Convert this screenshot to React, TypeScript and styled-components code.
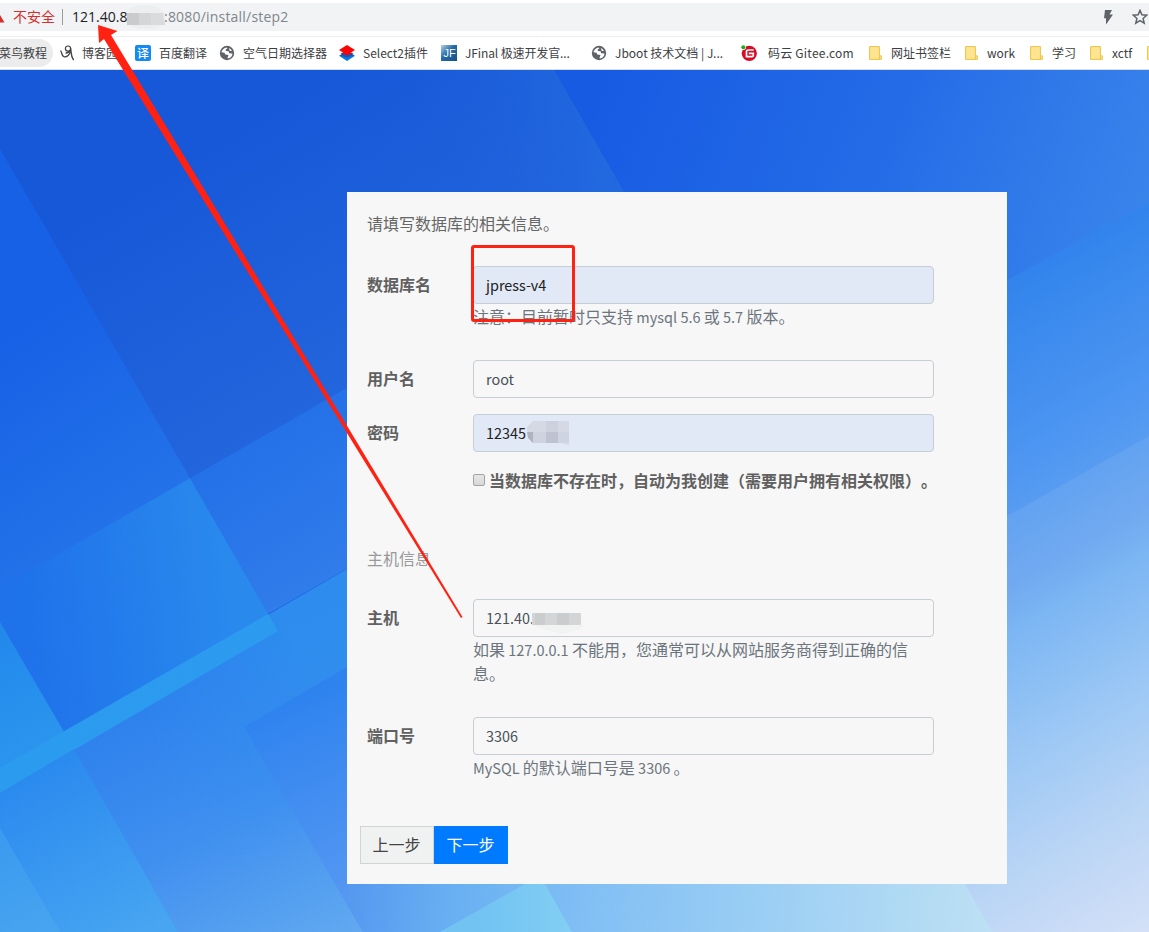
import React from 'react';
import styled, { createGlobalStyle } from 'styled-components';

const Global = createGlobalStyle`
  * { box-sizing: border-box; }
  body { margin: 0; background: #fff; overflow: hidden; }
`;

const Window = styled.div`
  position: relative;
  width: 1149px;
  height: 932px;
  overflow: hidden;
  display: flex;
  flex-direction: column;
  font-family: 'Noto Sans CJK SC', 'Noto Sans', sans-serif;
`;

const AddressBar = styled.div`
  flex: none;
  height: 28px;
  margin-top: 3px;
  background: #f1f3f4;
  display: flex;
  align-items: center;
  font-family: 'Open Sans', 'Noto Sans CJK SC', sans-serif;
  font-size: 14px;
  line-height: 28px;
  white-space: nowrap;
`;

const Insecure = styled.span`
  flex: none;
  color: #d3302f;
  margin-left: 13px;
  width: 42px;
`;

const Divider = styled.span`
  flex: none;
  width: 1px;
  height: 16px;
  background: #9a9da1;
  margin: 0 9px 0 7px;
`;

const Url = styled.span<{ $width: number; $muted?: boolean; $spacing?: number }>`
  flex: none;
  width: ${(p) => p.$width}px;
  color: ${(p) => (p.$muted ? '#80868b' : '#202124')};
  letter-spacing: ${(p) => p.$spacing ?? 0}px;
`;

const BarActions = styled.div`
  margin-left: auto;
  display: flex;
  align-items: center;
  gap: 19px;
  width: 46px;
  flex: none;
  svg { flex: none; }
`;

const Bookmarks = styled.nav`
  flex: none;
  height: 34px;
  margin-top: 5px;
  border-top: 1px solid #eceef0;
  border-bottom: 1px solid #d9dde3;
  display: flex;
  align-items: center;
  font-size: 12px;
  color: #3c4043;
  white-space: nowrap;
  svg { flex: none; display: block; }
`;

const Pill = styled.div`
  flex: none;
  width: 53px;
  height: 28px;
  margin-right: 7px;
  border-radius: 0 14px 14px 0;
  background: #ececed;
  line-height: 27px;
  text-indent: -1px;
`;

const Bookmark = styled.div<{ $width: number; $gap: number; $spacing?: number }>`
  flex: none;
  width: ${(p) => p.$width}px;
  display: flex;
  align-items: center;
  gap: ${(p) => p.$gap}px;
  letter-spacing: ${(p) => p.$spacing ?? 0}px;
`;

const Title = styled.span`
  line-height: 16px;
`;

const Page = styled.main`
  position: relative;
  flex: 1;
  overflow: hidden;
  padding: 122px 0 0 347px;
`;

const Backdrop = styled.svg`
  position: absolute;
  left: 0;
  top: 0;
`;

const Card = styled.form`
  position: relative;
  width: 660px;
  height: 692px;
  background: #f7f7f7;
  padding: 19px 20px 0;
  font-size: 16px;
  line-height: 24px;
  color: #666;
`;

const Intro = styled.p`
  margin: 0 0 31px;
`;

const Field = styled.div<{ $after: number }>`
  display: grid;
  grid-template-columns: 106px 461px;
  margin-bottom: ${(p) => p.$after}px;
`;

const Label = styled.label`
  font-weight: 700;
  color: #606060;
  line-height: 36px;
`;

const Control = styled.div<{ $filled?: boolean }>`
  position: relative;
  height: 38px;
  border: 1px solid #c7cdd6;
  border-radius: 4px;
  background: ${(p) => (p.$filled ? '#e1e8f6' : '#f7f7f7')};
  color: ${(p) => (p.$filled ? '#202020' : '#495057')};
  padding: 0 12px;
  font-size: 14.4px;
  line-height: 36px;
`;

const Help = styled.div`
  margin-bottom: 1px;
  color: #6c757d;
`;

const Latin = styled.span`
  font-size: 14.5px;
  line-height: 1;
`;

const CheckRow = styled.div`
  display: flex;
  align-items: center;
  gap: 4px;
  margin-left: 106px;
  height: 24px;
  font-weight: 700;
  color: #606060;
  white-space: nowrap;
`;

const CheckText = styled.span`
  padding-bottom: 1px;
  text-spacing-trim: space-all;
`;

const Box = styled.span`
  width: 12px;
  height: 12px;
  border: 1px solid #a3a3a3;
  border-radius: 2px;
  background: linear-gradient(#e6e6e6, #d8d8d8);
`;

const Section = styled.p`
  margin: 54px 0 29px;
  color: #999;
`;

const Buttons = styled.div`
  display: flex;
  margin-left: -7px;
`;

const Button = styled.button<{ $primary?: boolean }>`
  width: 74px;
  height: 38px;
  padding: 0 1px 1px 0;
  border: 1px solid ${(p) => (p.$primary ? '#007bff' : '#d2d4d4')};
  background: ${(p) => (p.$primary ? '#007bff' : '#f0f2f2')};
  color: ${(p) => (p.$primary ? '#fff' : '#444')};
  font: inherit;
  line-height: 35px;
`;

const Mosaic = styled.svg<{ $x: number; $y: number }>`
  position: absolute;
  left: ${(p) => p.$x}px;
  top: ${(p) => p.$y}px;
`;

const Highlight = styled.div`
  position: absolute;
  left: 471px;
  top: 245px;
  width: 104px;
  height: 77px;
  border: 3px solid #ff2213;
  border-radius: 3px;
`;

const Arrow = styled.svg`
  position: absolute;
  left: 0;
  top: 0;
`;

const TranslateBadge = styled.span`
  flex: none;
  width: 16px;
  height: 16px;
  border-radius: 2px;
  background: #1389f5;
  color: #fff;
  font-size: 12px;
  font-weight: 500;
  line-height: 15px;
  text-align: center;
`;

const Globe = () => (
  <svg width="16" height="16" viewBox="0 0 16 16">
    <circle cx="8" cy="8" r="7.2" fill="#5f6368" />
    <path d="M2.4 7.3 C3.2 4.6 5.2 3 7.6 2.5 L8.4 3.2 L6.6 4.8 L7 6 L9.6 6.2 L10.2 8.2 L13.5 8.4 C13.3 11.3 11.5 13.1 8.8 13.5 L8.6 12.2 L9.6 10.6 L8.6 9.7 L6.2 9.5 L5.6 7.8Z" fill="#fff" />
    <path d="M9.7 3.1 C10.8 3.5 12.2 4.3 12.8 6 L10.9 5.9Z" fill="#fff" />
  </svg>
);

const Folder = () => (
  <svg width="13" height="16" viewBox="0 0 13 16">
    <path d="M.6 1.6H10.4V10.8H12.3V14.4H.6Z" fill="#ffe591" stroke="#e9c447" />
    <path d="M10.4 14V11.2" stroke="#e9c447" />
  </svg>
);

const Swirl = () => (
  <svg width="16" height="16" viewBox="0 0 16 16" fill="none" stroke="#444" strokeLinecap="round">
    <path d="M.8 6 C2 7 1.4 11.6 4.3 11.8 C7 12 9.5 9.5 10.5 6.5" strokeWidth="1.3" />
    <circle cx="8" cy="3.6" r="2.6" strokeWidth="1.2" />
    <path d="M10.6 3.5 C11.5 7 10.5 10.5 13.4 14.6 M6.2 8 C8.5 7.5 10 6.5 10.7 5.5" strokeWidth="1.4" />
  </svg>
);

const Layers = () => (
  <svg width="16" height="16" viewBox="0 0 16 16">
    <path d="M0 10.8 L8 6 L16 10.8 L8 16Z" fill="#0b77e3" />
    <path d="M3 9 L13 9 L15 10.5 L8 12.6 L1 10.5Z" fill="#0a4aa4" opacity=".6" />
    <path d="M0 5 L8 0 L16 5 L8 10Z" fill="#fa0505" />
    <path d="M1.5 8.8 L4.2 7.2 L8 9.6 L11.8 7.2 L14.5 8.8 L8 10.6Z" fill="#c01635" />
  </svg>
);

const JFinal = () => (
  <svg width="16" height="16" viewBox="0 0 16 16">
    <defs>
      <linearGradient id="jf" x1="0" y1="0" x2="1" y2="1">
        <stop offset="0" stopColor="#b5d0e6" />
        <stop offset=".45" stopColor="#256ba6" />
        <stop offset="1" stopColor="#174f86" />
      </linearGradient>
    </defs>
    <rect width="16" height="16" fill="url(#jf)" />
    <text x="8.5" y="12.3" textAnchor="middle" fontSize="11" fill="#fff" fontFamily="Liberation Sans">JF</text>
  </svg>
);

const Gitee = () => (
  <svg width="16" height="16" viewBox="0 0 16 16">
    <circle cx="8.3" cy="8.3" r="7.6" fill="#d80b25" />
    <path d="M12.7 5H7.2Q5.5 5 5.5 6.7V11.6H11Q12.3 11.6 12.3 10.2V8.4H7.8" fill="none" stroke="#fff" strokeWidth="1.7" />
    <circle cx="2.3" cy="2.2" r="2.7" fill="#fff" />
    <circle cx="2.3" cy="2.2" r="2" fill="#13b313" />
  </svg>
);

type GradientProps = { id: string; from: [number, number, string]; to: [number, number, string]; mid?: string };
const Gradient = ({ id, from, to, mid }: GradientProps) => (
  <linearGradient id={id} gradientUnits="userSpaceOnUse" x1={from[0]} y1={from[1]} x2={to[0]} y2={to[1]}>
    <stop offset="0" stopColor={from[2]} />
    {mid && <stop offset=".5" stopColor={mid} />}
    <stop offset="1" stopColor={to[2]} />
  </linearGradient>
);

const Facets = () => (
  <Backdrop width="1149" height="862" viewBox="0 70 1149 862">
    <defs>
      <Gradient id="right" from={[600, 90, '#175be3']} to={[1110, 290, '#3884eb']} mid="#236be7" />
      <Gradient id="dark" from={[200, 150, '#1758d9']} to={[360, 430, '#2567dc']} />
      <Gradient id="darkEdge" from={[400, 160, '#1c5cda00']} to={[600, 140, '#2268df']} />
      <Gradient id="left" from={[20, 330, '#1761e6']} to={[160, 540, '#2575e9']} />
      <Gradient id="diamond" from={[20, 620, '#1f72ea']} to={[230, 600, '#2989ed']} />
      <Gradient id="upper" from={[240, 440, '#2370e8']} to={[340, 600, '#327eeb']} />
      <Gradient id="ribbon" from={[0, 800, '#2b9bf0']} to={[278, 620, '#2c9bef']} />
      <Gradient id="wedge" from={[0, 640, '#238aec']} to={[70, 760, '#2c97ee']} />
      <Gradient id="lowerLeft" from={[20, 780, '#2b8aee']} to={[110, 950, '#47a5f2']} />
      <Gradient id="middle" from={[170, 680, '#2d80ec']} to={[310, 960, '#62a9f0']} mid="#4090f0" />
      <Gradient id="band" from={[140, 740, '#2d8def00']} to={[310, 660, '#2e92ef']} />
      <Gradient id="inner" from={[270, 710, '#2f83ef']} to={[350, 900, '#5698f2']} />
      <linearGradient id="bandFade" gradientUnits="userSpaceOnUse" x1="200" y1="700" x2="270" y2="860">
        <stop offset="0" stopColor="#fff" />
        <stop offset="1" stopColor="#000" />
      </linearGradient>
      <mask id="bandMask" maskUnits="userSpaceOnUse" x="0" y="540" width="400" height="400">
        <rect y="540" width="400" height="400" fill="url(#bandFade)" />
      </mask>
      <linearGradient id="bottom" gradientUnits="userSpaceOnUse" x1="350" y1="890" x2="990" y2="930">
        <stop offset="0" stopColor="#5599f0" />
        <stop offset=".16" stopColor="#68b0f2" />
        <stop offset=".36" stopColor="#80bef4" />
        <stop offset=".6" stopColor="#97ccf4" />
        <stop offset="1" stopColor="#bde0f4" />
      </linearGradient>
      <Gradient id="peak" from={[480, 932, '#72c3f2']} to={[570, 932, '#82cef4']} />
      <linearGradient id="side" gradientUnits="userSpaceOnUse" x1="1010" y1="270" x2="1190" y2="580">
        <stop offset="0" stopColor="#3083ec" />
        <stop offset=".5" stopColor="#4f97f2" />
        <stop offset=".72" stopColor="#62a3f0" />
      </linearGradient>
      <linearGradient id="sideLow" gradientUnits="userSpaceOnUse" x1="1000" y1="520" x2="1216" y2="895">
        <stop offset="0" stopColor="#62a2f1" />
        <stop offset=".15" stopColor="#72aaf0" />
        <stop offset=".24" stopColor="#7cb6f3" />
        <stop offset=".5" stopColor="#9dc8f5" />
        <stop offset=".72" stopColor="#b8d4f5" />
        <stop offset="1" stopColor="#d4e0f7" />
      </linearGradient>
    </defs>
    <rect y="70" width="1149" height="862" fill="url(#right)" />
    <path d="M0 70H554L624 192V388H347L190 478L0 149Z" fill="url(#dark)" />
    <path d="M360 70H554L624 192H360Z" fill="url(#darkEdge)" />
    <path d="M0 149L190 478L0 589Z" fill="url(#left)" />
    <path d="M0 793L190 660L380 550V932H0Z" fill="url(#middle)" />
    <path d="M0 793L190 660L380 550V932H0Z" fill="url(#band)" opacity=".7" mask="url(#bandMask)" />
    <path d="M190 478L350 386V567L268 614Z" fill="url(#upper)" />
    <path d="M0 588L190 478L278 631L64 751L0 780Z" fill="url(#diamond)" />
    <path d="M244 727L350 665V910Z" fill="url(#inner)" />
    <path d="M0 622L74 749L0 793Z" fill="url(#wedge)" />
    <path d="M0 768L268 614L278 631L0 793Z" fill="url(#ribbon)" />
    <path d="M0 793L74 749L178 932H0Z" fill="url(#lowerLeft)" />
    <path d="M0 828L60 932H0Z" fill="#55b2ef" opacity=".32" />
    <path d="M347 884H1000V932H363L347 905Z" fill="url(#bottom)" />
    <path d="M440 932L525 884H545L572 932Z" fill="url(#peak)" />
    <path d="M1000 284L1149 203V448L1000 530Z" fill="url(#side)" />
    <path d="M1000 520L1149 436V932H992L965 884H1000Z" fill="url(#sideLow)" />
  </Backdrop>
);

export default function App() {
  return (
    <Window>
      <Global />
      <AddressBar>
        <Insecure>不安全</Insecure>
        <Divider />
        <Url $width={92}>121.40.8</Url>
        <Url $width={130} $muted $spacing={0.2}>:8080/install/step2</Url>
        <BarActions>
          <svg width="10" height="15" viewBox="0 0 10 15"><path d="M2 0H9L6.5 4.6H10L3 14.5V8.3H1Z" fill="#5f6368" /></svg>
          <svg width="16" height="16" viewBox="0 0 16 16"><path d="M8 1.4L9.9 5.8L14.7 6.2L11.1 9.4L12.2 14.1L8 11.6L3.8 14.1L4.9 9.4L1.3 6.2L6.1 5.8Z" fill="none" stroke="#5f6368" strokeWidth="1.5" /></svg>
        </BarActions>
      </AddressBar>
      <Bookmarks>
        <Pill>菜鸟教程</Pill>
        <Bookmark $width={75} $gap={6}><Swirl /><Title>博客园</Title></Bookmark>
        <Bookmark $width={84} $gap={8}><TranslateBadge>译</TranslateBadge><Title>百度翻译</Title></Bookmark>
        <Bookmark $width={120} $gap={8}><Globe /><Title>空气日期选择器</Title></Bookmark>
        <Bookmark $width={102} $gap={8}><Layers /><Title>Select2插件</Title></Bookmark>
        <Bookmark $width={150} $gap={8} $spacing={-0.12}><JFinal /><Title>JFinal 极速开发官...</Title></Bookmark>
        <Bookmark $width={150} $gap={8}><Globe /><Title>Jboot 技术文档 | J...</Title></Bookmark>
        <Bookmark $width={128} $gap={11} $spacing={0.22}><Gitee /><Title>码云 Gitee.com</Title></Bookmark>
        <Bookmark $width={96} $gap={9}><Folder /><Title>网址书签栏</Title></Bookmark>
        <Bookmark $width={65} $gap={9}><Folder /><Title>work</Title></Bookmark>
        <Bookmark $width={60} $gap={9}><Folder /><Title>学习</Title></Bookmark>
        <Bookmark $width={57} $gap={9}><Folder /><Title>xctf</Title></Bookmark>
        <Folder />
      </Bookmarks>
      <Page>
        <Facets />
        <Card>
          <Intro>请填写数据库的相关信息。</Intro>
          <Field $after={31}>
            <Label>数据库名</Label>
            <div>
              <Control $filled>jpress-v4</Control>
              <Help>注意：目前暂时只支持<Latin> mysql 5.6 </Latin>或<Latin> 5.7 </Latin>版本。</Help>
            </div>
          </Field>
          <Field $after={16}>
            <Label>用户名</Label>
            <Control>root</Control>
          </Field>
          <Field $after={16}>
            <Label>密码</Label>
            <Control $filled>
              12345
              <Mosaic $x={52} $y={5} width="45" height="26" viewBox="0 0 45 26">
                <path d="M7 1H43V25L32 22H9L2 17L1 7Z" fill="#d4d9e4" />
                <path d="M1 12H7V23L2 18Z" fill="#aeb3bf" />
                <path d="M7 12H20V23H7Z" fill="#ced3df" />
                <path d="M20 1H32V12H20Z" fill="#ccd1dd" />
                <path d="M20 12H32V23H20Z" fill="#bdc3d1" />
                <path d="M32 12H43V23H32Z" fill="#ced4e1" />
              </Mosaic>
            </Control>
          </Field>
          <CheckRow><Box /><CheckText>当数据库不存在时，自动为我创建（需要用户拥有相关权限）。</CheckText></CheckRow>
          <Section>主机信息</Section>
          <Field $after={31}>
            <Label>主机</Label>
            <div>
              <Control>
                121.40.
                <Mosaic $x={56} $y={13} width="56" height="22" viewBox="0 0 56 22">
                  <path d="M2 12H55L48 17L32 21L16 17Z" fill="#f1f2f2" />
                  <path d="M2 0H51V12H2Z" fill="#d4d5d7" />
                  <path d="M5 0H15V12H5Z M27 0H39V12H27Z" fill="#cbccce" />
                </Mosaic>
              </Control>
              <Help>如果<Latin> 127.0.0.1 </Latin>不能用，您通常可以从网站服务商得到正确的信息。</Help>
            </div>
          </Field>
          <Field $after={46}>
            <Label>端口号</Label>
            <div>
              <Control>3306</Control>
              <Help><Latin>MySQL </Latin>的默认端口号是<Latin> 3306 </Latin>。</Help>
            </div>
          </Field>
          <Buttons>
            <Button type="button">上一步</Button>
            <Button type="button" $primary>下一步</Button>
          </Buttons>
        </Card>
      </Page>
      <Mosaic $x={125} $y={5} width="42" height="26" viewBox="0 0 42 26">
        <path d="M4 3L14 0L30 1L40 8V18L30 24H14L4 20Z" fill="#eceeef" />
        <path d="M2 8H38L40 20H2Z" fill="#d9dbdd" />
        <path d="M2 8H14V20H2Z" fill="#c9cbcd" />
        <path d="M14 8H26V20H14Z" fill="#d4d6d8" />
      </Mosaic>
      <Highlight />
      <Arrow width="1149" height="932" viewBox="0 0 1149 932">
        <path d="M0 15L4.5 22.5H0Z" fill="#d3302f" />
        <path d="M98 25L117.5 31L111 35L462.5 617L461 618L104 39L99 43Z" fill="#ff2213" />
      </Arrow>
    </Window>
  );
}
